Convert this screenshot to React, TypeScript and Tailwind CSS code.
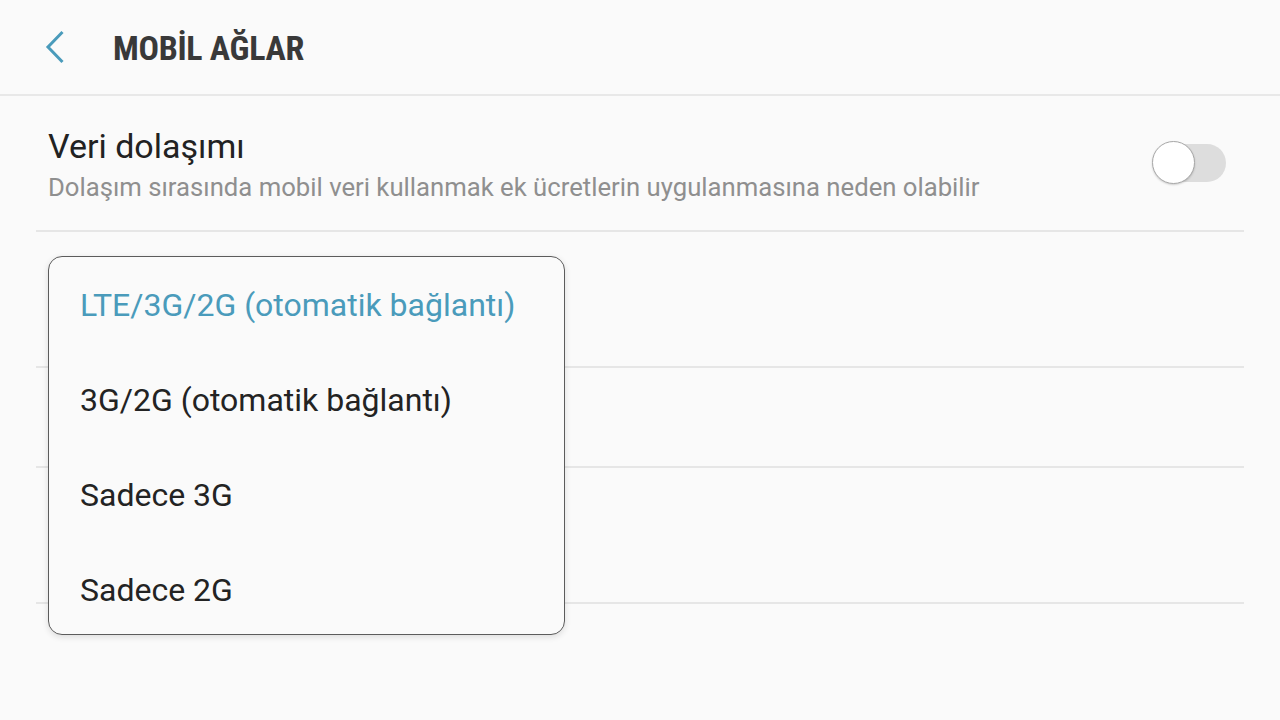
import React from "react";

function Toggle() {
  return (
    <div className="relative w-[74px] h-[44px]">
      <div className="absolute right-0 top-[3px] w-[60px] h-[38px] rounded-full bg-[#dddddd]" />
      <div className="absolute left-0 top-0 w-[43px] h-[43px] rounded-full bg-white border border-[#a8a8a8] shadow-[0_1px_2px_rgba(0,0,0,0.18)]" />
    </div>
  );
}

export default function App() {
  const items = [
    "LTE/3G/2G (otomatik bağlantı)",
    "3G/2G (otomatik bağlantı)",
    "Sadece 3G",
    "Sadece 2G",
  ];
  return (
    <div
      className="relative w-[1280px] h-[720px] overflow-hidden bg-[#fafafa]"
      style={{ fontFamily: "Roboto, 'Noto Sans', sans-serif" }}
    >
      {/* Header */}
      <div className="h-[94px] flex items-center">
        <svg className="ml-[44px]" width="24" height="34" viewBox="0 0 24 34" fill="none">
          <path d="M18.5 2 L4 17 L18.5 32" stroke="#4a9bbb" strokeWidth="3" strokeLinecap="butt" strokeLinejoin="miter" />
        </svg>
        <div className="ml-[45px] text-[34px] font-bold text-[#393939] tracking-[-0.3px] leading-none [font-stretch:condensed] pt-[2px]">
          MOBİL AĞLAR
        </div>
      </div>
      <div className="h-[2px] bg-[#e8e8e8]" />

      {/* List */}
      <div className="px-[36px]">
        <div className="h-[134px] flex items-start">
          <div className="flex-1 pl-[12px] pt-[30px]">
            <div className="text-[34px] leading-[40px] text-[#222222]">Veri dolaşımı</div>
            <div className="text-[25.7px] leading-[30px] text-[#8f8f8f] mt-[6px]">
              Dolaşım sırasında mobil veri kullanmak ek ücretlerin uygulanmasına neden olabilir
            </div>
          </div>
          <div className="mr-[18px] self-center">
            <Toggle />
          </div>
        </div>
        <div className="h-[2px] bg-[#e6e6e6]" />
        <div className="h-[134px]" />
        <div className="h-[2px] bg-[#e6e6e6]" />
        <div className="h-[98px]" />
        <div className="h-[2px] bg-[#e6e6e6]" />
        <div className="h-[134px]" />
        <div className="h-[2px] bg-[#e6e6e6]" />
      </div>

      {/* Popup */}
      <div className="absolute left-[48px] top-[256px] w-[517px] h-[379px] overflow-hidden rounded-[14px] border border-[#5c5c5c] bg-[#fafafa] shadow-[0_2px_6px_rgba(0,0,0,0.12)]">
        {items.map((t, i) => (
          <div
            key={t}
            className={
              "h-[95px] flex items-center pl-[31px] text-[32px] leading-none " +
              (i === 0 ? "text-[#4a9bbb]" : "text-[#232323]")
            }
          >
            {t}
          </div>
        ))}
      </div>
    </div>
  );
}
